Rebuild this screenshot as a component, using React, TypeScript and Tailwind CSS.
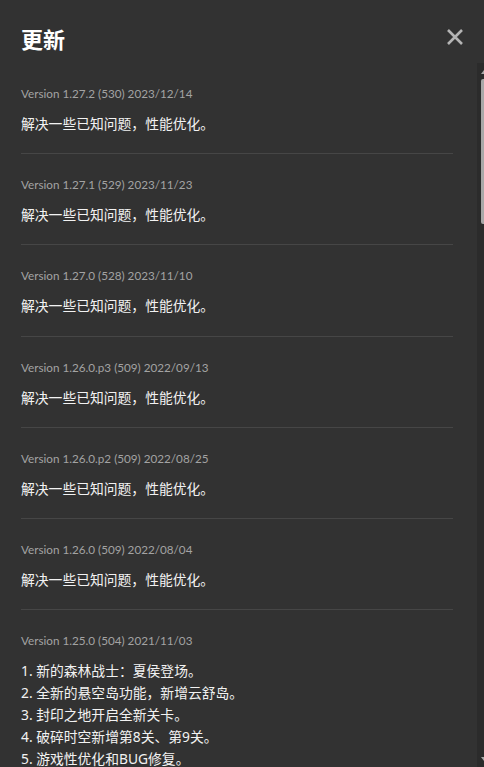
import React from "react";

const entries: { v: string; lines: string[] }[] = [
  { v: "Version 1.27.2 (530) 2023/12/14", lines: ["解决一些已知问题，性能优化。"] },
  { v: "Version 1.27.1 (529) 2023/11/23", lines: ["解决一些已知问题，性能优化。"] },
  { v: "Version 1.27.0 (528) 2023/11/10", lines: ["解决一些已知问题，性能优化。"] },
  { v: "Version 1.26.0.p3 (509) 2022/09/13", lines: ["解决一些已知问题，性能优化。"] },
  { v: "Version 1.26.0.p2 (509) 2022/08/25", lines: ["解决一些已知问题，性能优化。"] },
  { v: "Version 1.26.0 (509) 2022/08/04", lines: ["解决一些已知问题，性能优化。"] },
  {
    v: "Version 1.25.0 (504) 2021/11/03",
    lines: [
      "1. 新的森林战士：夏侯登场。",
      "2. 全新的悬空岛功能，新增云舒岛。",
      "3. 封印之地开启全新关卡。",
      "4. 破碎时空新增第8关、第9关。",
      "5. 游戏性优化和BUG修复。",
    ],
  },
];

export default function App() {
  return (
    <div
      className="w-[484px] h-[767px] overflow-hidden bg-[#323232] flex flex-col"
      style={{ fontFamily: '"Noto Sans", "Noto Sans CJK SC", sans-serif' }}
    >
      <div className="h-[63px] shrink-0 flex items-start justify-between pl-[21px] pr-[20px] pt-[26px]">
        <h1 className="text-[22px] leading-[26px] font-bold text-white">更新</h1>
        <svg width="18" height="18" viewBox="0 0 18 18" className="mt-[2px]">
          <path d="M2 2 L16 16 M16 2 L2 16" stroke="#b4b4b4" strokeWidth="2.6" strokeLinecap="butt" />
        </svg>
      </div>
      <div className="flex flex-1 min-h-0">
        <div className="flex-1 min-w-0 pl-[21px] pr-[24px] overflow-hidden">
          {entries.map((e, i) => (
            <div key={i}>
              <div className="pt-[20px] pb-[18.2px]">
                <div
                  className="text-[11.7px] leading-[20px] text-[#a3a3a3]"
                  style={{ fontFamily: 'Lato, "Noto Sans", sans-serif' }}
                >
                  {e.v}
                </div>
                <div className="mt-[10px] text-[13.8px] leading-[22px] text-[#f2f2f2]">
                  {e.lines.map((l, j) => (
                    <div key={j}>{l}</div>
                  ))}
                </div>
              </div>
              {i < entries.length - 1 && <div className="h-px bg-[#464646]" />}
            </div>
          ))}
        </div>
        <div className="w-[7px] shrink-0 bg-[#2b2b2b] flex flex-col items-end">
          <div className="mt-[7px] w-0 h-0 border-l-[3px] border-l-transparent border-b-[4px] border-b-[#a8a8a8]" />
          <div className="mt-[5px] w-[3px] h-[145px] bg-[#a8a8a8] rounded-l-[2px]" />
          <div className="flex-1" />
          <div className="mb-[6px] w-0 h-0 border-l-[3px] border-l-transparent border-t-[4px] border-t-[#a8a8a8]" />
        </div>
      </div>
    </div>
  );
}
